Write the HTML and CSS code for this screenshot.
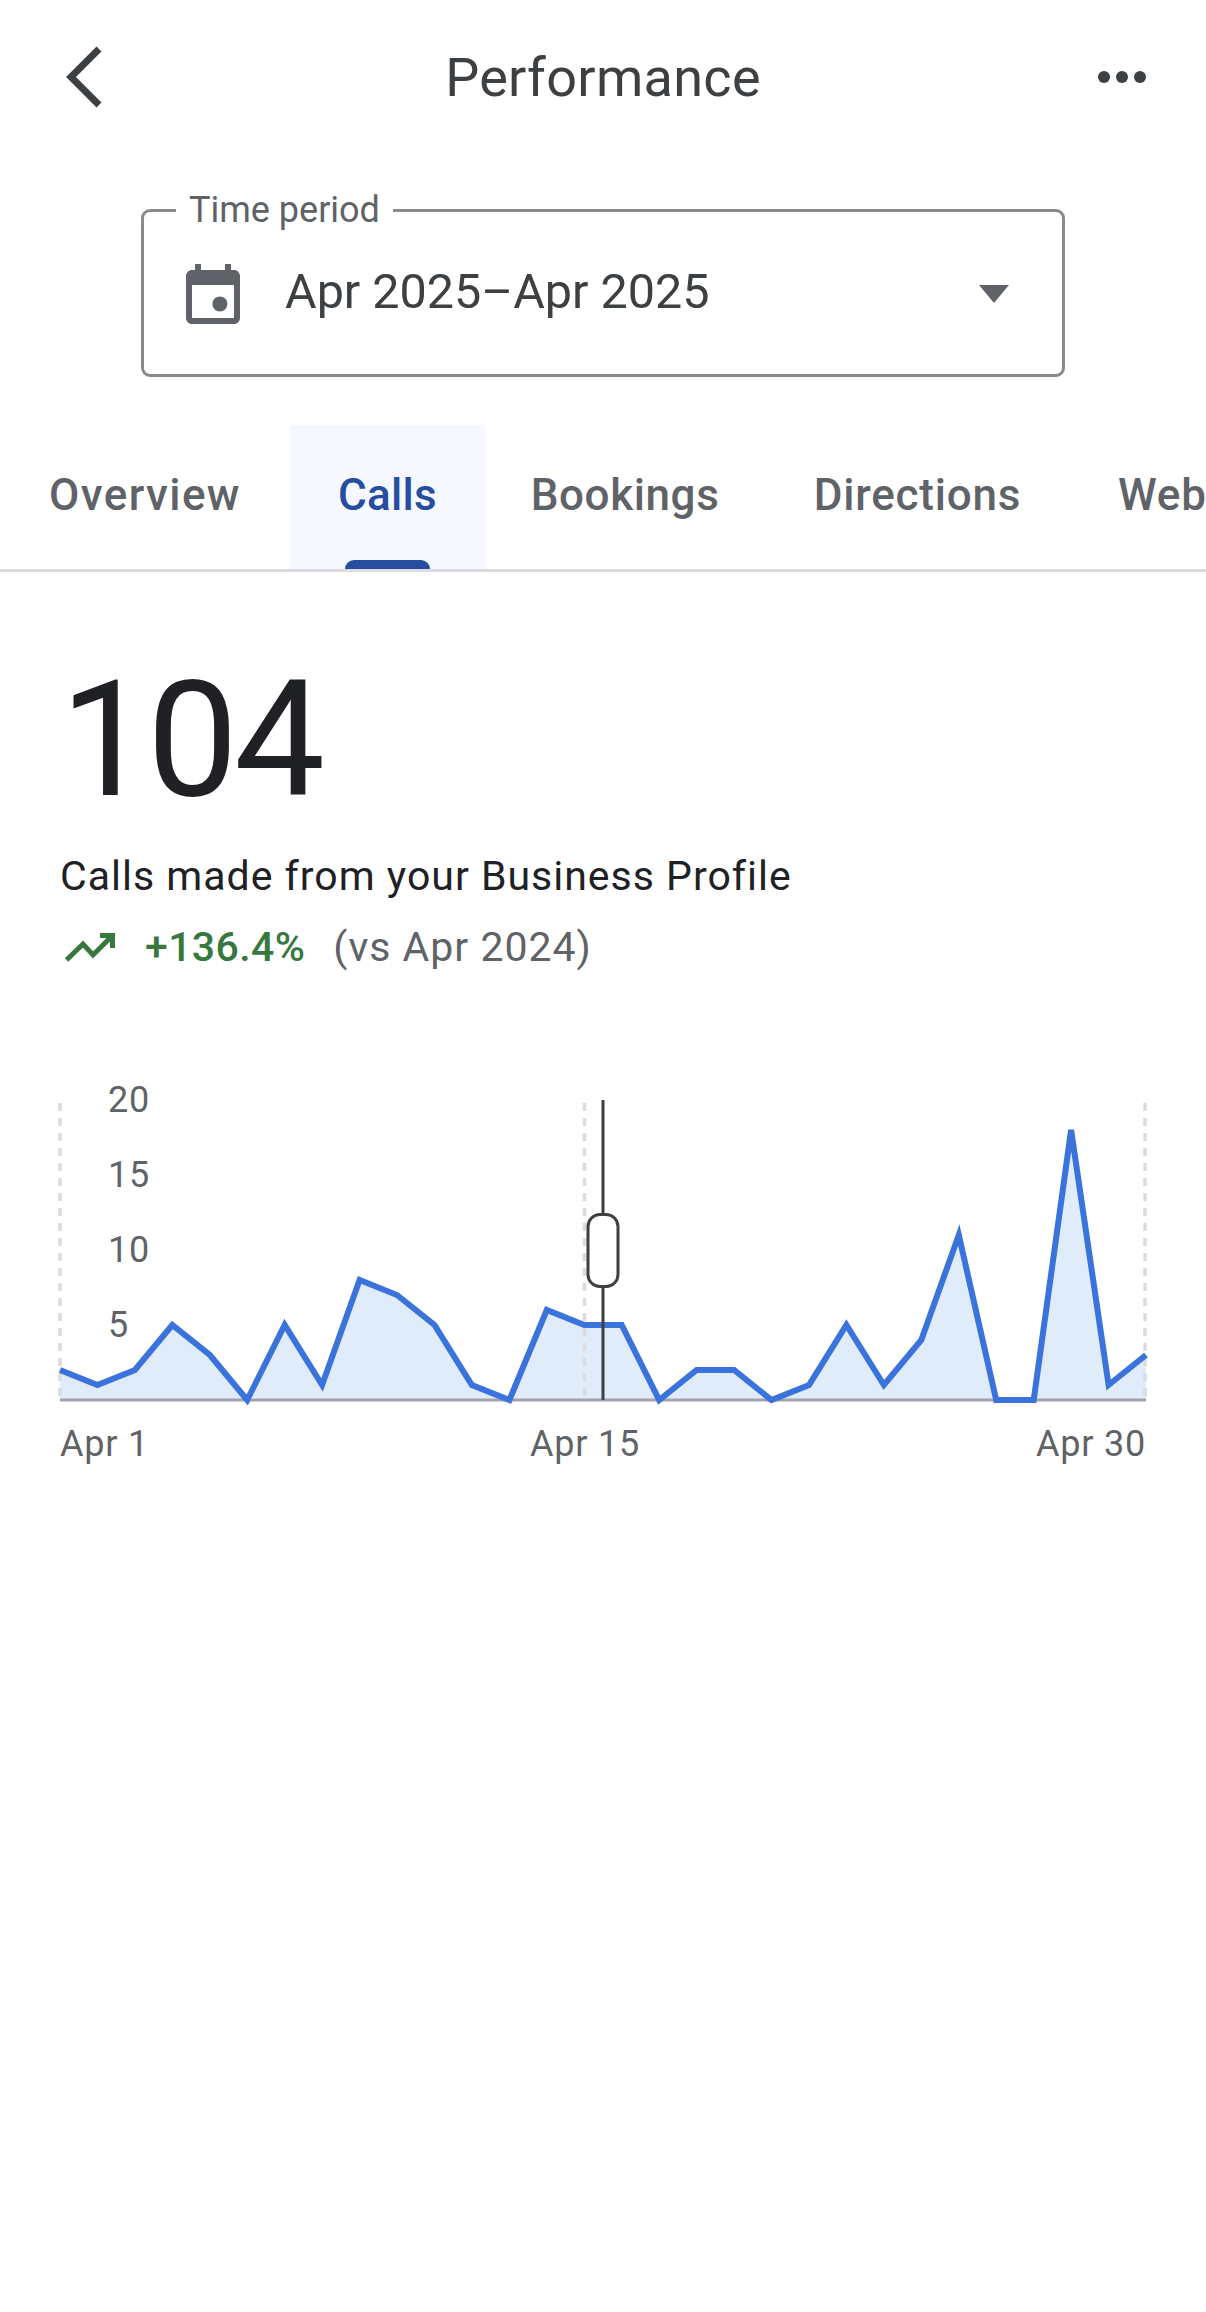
FILE: index.html
```html
<!DOCTYPE html>
<html lang="en">
<head>
    <meta charset="UTF-8">
    <meta name="viewport" content="width=device-width, initial-scale=1.0">
    <title>Performance</title>
    <link rel="stylesheet" href="styles.css">
</head>
<body>
    <header class="topbar">
        <svg class="back" viewBox="0 0 36 62"><path d="M33 3 5 31l28 28"/></svg>
        <h1>Performance</h1>
        <svg class="more" viewBox="0 0 48 12"><circle cx="6" cy="6" r="6"/><circle cx="24" cy="6" r="6"/><circle cx="42" cy="6" r="6"/></svg>
    </header>

    <fieldset class="period">
        <legend>Time period</legend>
        <svg class="cal" viewBox="3 1 18 20"><path d="M19 3h-1V1h-2v2H8V1H6v2H5C3.9 3 3 3.9 3 5v14c0 1.100.9 2 2 2h14c1.100 0 2-.9 2-2V5c0-1.100-.9-2-2-2zm0 16H5V8h14v11z"/><circle cx="14.300" cy="14.300" r="2.500"/></svg>
        <span class="range">Apr 2025–Apr 2025</span>
        <svg class="caret" viewBox="0 0 30 18"><path d="M0 0h30L15 18z"/></svg>
    </fieldset>

    <nav class="tabs">
        <a>Overview</a>
        <a class="active">Calls</a>
        <a>Bookings</a>
        <a>Directions</a>
        <a>Web</a>
    </nav>

    <section class="summary">
        <div class="total">104</div>
        <p class="caption">Calls made from your Business Profile</p>
        <p class="change">
            <svg class="trend" viewBox="0 0 52 30"><path d="M1.500 28 18 12l10 11L46 5"/><path d="M35 3.500h12.500V16"/></svg>
            <b>+136.4%</b>
            <span>(vs Apr 2024)</span>
        </p>
    </section>

    <svg class="chart" viewBox="0 0 1206 400" id="chart"></svg>

    <script>
        // apr daily calls
        const calls = [2,1,2,5,3,0,5,1,8,7,5,1,0,6,5,5,0,2,2,0,1,5,1,4,11,0,0,18,1,3];
        const left = 60, step = 1086 / 29, base = 330;
        const pts = calls.map((v, i) => (left + i * step).toFixed(1) + "," + (base - v * 15));
        let out = "";
        out += `<polygon class="area" points="${left},${base} ${pts.join(" ")} 1146,${base}"/>`;
        [60, 584.5, 1145].forEach(x => {
            out += `<line class="dash" x1="${x}" y1="33" x2="${x}" y2="${base}"/>`;
        });
        out += `<line class="axis" x1="60" y1="${base}" x2="1146" y2="${base}"/>`;
        out += `<polyline class="line" points="${pts.join(" ")}"/>`;
        out += `<line class="cursor" x1="603" y1="30" x2="603" y2="${base}"/>`;
        out += `<rect class="handle" x="588" y="144.500" width="30" height="72" rx="12"/>`;
        [20, 15, 10, 5].forEach(v => {
            out += `<text class="tick" x="108" y="${base - v * 15 + 11.5}" text-anchor="start">${v}</text>`;
        });
        out += `<text class="tick" x="60" y="386" text-anchor="start">Apr 1</text>`;
        out += `<text class="tick" x="585" y="386" text-anchor="middle">Apr 15</text>`;
        out += `<text class="tick" x="1146" y="386" text-anchor="end">Apr 30</text>`;
        document.getElementById("chart").innerHTML = out;
    </script>
</body>
</html>
```

FILE: styles.css
```css
* {
    box-sizing: border-box;
}

body {
    margin: 0;
    background-color: #fff;
    font-family: Roboto, "Liberation Sans", sans-serif;
    overflow-x: hidden;
}

.topbar {
    display: grid;
    grid-template-columns: 1fr auto 1fr;
    align-items: center;
    height: 154px;
    padding: 0 60px 0 66px;
}

.topbar h1 {
    margin: 0 0 0 -6px;
    font-size: 54px;
    font-weight: 400;
    letter-spacing: 0.300px;
    color: #3c4043;
}

.back {
    width: 36px;
    height: 62px;
}

.back path {
    fill: none;
    stroke: #3c4043;
    stroke-width: 7;
}

.more {
    width: 48px;
    height: 12px;
    justify-self: end;
    fill: #3c4043;
}

.period {
    display: flex;
    align-items: center;
    width: 924px;
    height: 188px;
    margin: 35px 0 0 141px;
    padding: 0 0 17px 42px;
    border: 3px solid #888a8d;
    border-radius: 9px;
}

.period legend {
    margin-left: -10px;
    padding: 0 13px;
    font-size: 36px;
    color: #5f6368;
}

.cal {
    width: 54px;
    height: 60px;
    fill: #5f6368;
}

.range {
    margin: 0 0 6px 45px;
    font-size: 48.500px;
    color: #3c4043;
}

.caret {
    width: 30px;
    height: 18px;
    margin-left: auto;
    margin-right: 53px;
    fill: #5f6368;
}

.tabs {
    display: flex;
    height: 147px;
    margin-top: 48px;
    border-bottom: 3px solid #dadce0;
    white-space: nowrap;
    overflow: hidden;
}

.tabs a {
    position: relative;
    flex: none;
    padding-top: 44px;
    text-align: center;
    font-size: 44px;
    font-weight: 500;
    letter-spacing: 0.800px;
    color: #5f6368;
}

.tabs a:nth-child(1) {
    width: 290px;
    letter-spacing: 1.400px;
}

.tabs a:nth-child(2) {
    width: 195px;
    letter-spacing: 0.300px;
}

.tabs a:nth-child(3) {
    width: 280px;
    letter-spacing: 0.600px;
}

.tabs a:nth-child(4) {
    width: 305px;
}

.tabs a:nth-child(5) {
    padding-left: 48px;
}

.tabs a.active {
    background-color: #f5f8fe;
    color: #264d9f;
}

.tabs a.active::after {
    content: "";
    position: absolute;
    left: 55px;
    right: 55px;
    bottom: 0;
    height: 9px;
    border-radius: 9px 9px 0 0;
    background-color: #264d9f;
}

.summary {
    padding: 0 60px;
}

.total {
    margin-top: 102px;
    height: 132px;
    font-size: 162px;
    line-height: 132px;
    font-weight: 400;
    letter-spacing: -4px;
    color: #202124;
}

.caption {
    margin: 46px 0 0;
    font-size: 41px;
    line-height: 48px;
    letter-spacing: 1px;
    color: #202124;
}

.change {
    display: flex;
    align-items: center;
    margin: 23px 0 0;
    height: 48px;
    font-size: 41px;
    letter-spacing: 1px;
    color: #5f6368;
}

.change b {
    margin-left: 28px;
    font-weight: 500;
    letter-spacing: 0.400px;
    color: #38783f;
}

.change span {
    margin-left: 28px;
}

.trend {
    width: 52px;
    height: 30px;
    margin-left: 5px;
    fill: none;
    stroke: #38783f;
    stroke-width: 5;
}

.chart {
    display: block;
    width: 1206px;
    height: 400px;
    margin-top: 99px;
}

.dash {
    stroke: #dadce0;
    stroke-width: 3.500;
    stroke-dasharray: 8 7;
}

.area {
    fill: #e1ecfb;
}

.axis {
    stroke: #a0a3ad;
    stroke-width: 3;
}

.line {
    fill: none;
    stroke: #3b73dc;
    stroke-width: 6;
    stroke-miterlimit: 5;
}

.cursor {
    stroke: #3c4043;
    stroke-width: 3;
}

.handle {
    fill: #fff;
    stroke: #3c4043;
    stroke-width: 3;
}

.tick {
    font-size: 36px;
    letter-spacing: 0.800px;
    fill: #5f6368;
}
```
